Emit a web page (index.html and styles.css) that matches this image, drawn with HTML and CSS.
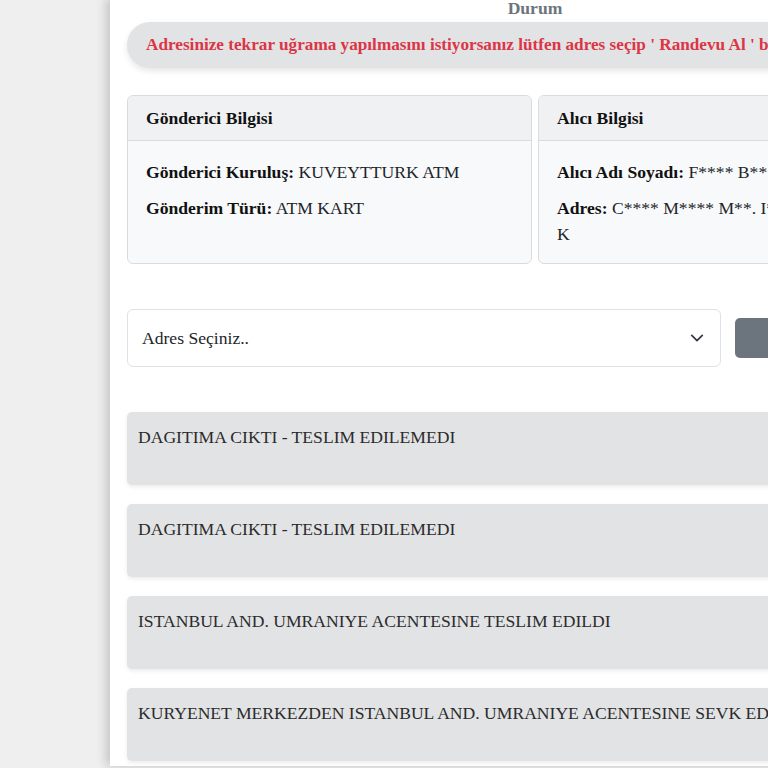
FILE: index.html
```html
<!DOCTYPE html>
<html lang="tr">
<head>
    <meta charset="UTF-8">
    <meta name="viewport" content="width=device-width, initial-scale=1.0">
    <title>Gönderi Takip</title>
    <link rel="stylesheet" href="styles.css">
</head>
<body>

    <div class="page">
        <div class="panel">
            <h3 class="status-title">Durum</h3>

            <div class="alert-pill">
                Adresinize tekrar uğrama yapılmasını istiyorsanız lütfen adres seçip ' Randevu Al ' butonuna tıklayınız.
            </div>

            <!-- Gönderici / Alıcı -->
            <div class="info-grid">
                <div class="info-card">
                    <div class="info-head">Gönderici Bilgisi</div>
                    <div class="info-body">
                        <p><b>Gönderici Kuruluş:</b> KUVEYTTURK ATM</p>
                        <p><b>Gönderim Türü:</b> ATM KART</p>
                    </div>
                </div>
                <div class="info-card">
                    <div class="info-head">Alıcı Bilgisi</div>
                    <div class="info-body">
                        <p><b>Alıcı Adı Soyadı:</b> F**** B****</p>
                        <p><b>Adres:</b> C**** M**** M**. I**** S**. N**:**<br>K</p>
                    </div>
                </div>
            </div>

            <!-- Randevu -->
            <div class="address-row">
                <div class="select-box">
                    <span>Adres Seçiniz..</span>
                    <svg width="14" height="14" viewBox="0 0 16 16">
                        <path d="M2 5l6 6 6-6" fill="none" stroke="#343a40" stroke-width="2" stroke-linecap="round" stroke-linejoin="round"/>
                    </svg>
                </div>
                <button class="btn-appointment">Randevu Al</button>
            </div>

            <!-- Hareketler -->
            <div class="timeline">
                <div class="timeline-item">DAGITIMA CIKTI - TESLIM EDILEMEDI</div>
                <div class="timeline-item">DAGITIMA CIKTI - TESLIM EDILEMEDI</div>
                <div class="timeline-item">ISTANBUL AND. UMRANIYE ACENTESINE TESLIM EDILDI</div>
                <div class="timeline-item">KURYENET MERKEZDEN ISTANBUL AND. UMRANIYE ACENTESINE SEVK EDILDI</div>
            </div>
        </div>
    </div>

</body>
</html>
```

FILE: styles.css
```css
* {
    margin: 0;
    padding: 0;
    box-sizing: border-box;
    font-family: "Liberation Serif", "Times New Roman", serif;
}

html,
body {
    height: 100%;
    overflow: hidden;
}

body {
    background: #efefef;
    color: #212529;
}

.page {
    padding-left: 110px;
}

.panel {
    width: 850px;
    min-height: 100vh;
    background: #fff;
    padding: 0 17px;
    box-shadow: -4px 0 10px rgba(0, 0, 0, 0.18);
}

.status-title {
    text-align: center;
    color: #6c757d;
    font-size: 17.6px;
    font-weight: 700;
    line-height: 20px;
    margin-top: -2px;
}

.alert-pill {
    margin-top: 4px;
    height: 46px;
    display: flex;
    align-items: center;
    padding: 0 19px;
    background: #e2e3e5;
    border-radius: 23px;
    color: #dc3545;
    font-size: 17.2px;
    font-weight: 700;
    white-space: nowrap;
    overflow: hidden;
    box-shadow: 0 3px 6px rgba(0, 0, 0, 0.1);
}

.info-grid {
    display: grid;
    grid-template-columns: 1fr 1fr;
    gap: 6px;
    margin-top: 27px;
}

.info-card {
    border: 1px solid #d9dcdf;
    border-radius: 6px;
    background: #f8f9fa;
    height: 169px;
    overflow: hidden;
}

.info-head {
    height: 45px;
    display: flex;
    align-items: center;
    padding: 0 18px;
    background: #f0f1f3;
    border-bottom: 1px solid #d9dcdf;
    font-size: 17.6px;
    font-weight: 700;
    color: #111;
}

.info-body {
    padding: 18px 18px;
    font-size: 17.6px;
    line-height: 26px;
    color: #212529;
}

.info-body p {
    margin-bottom: 10px;
}

.info-body b {
    color: #111;
}

.address-row {
    display: flex;
    align-items: center;
    gap: 14px;
    margin-top: 45px;
}

.select-box {
    width: 594px;
    height: 58px;
    display: flex;
    align-items: center;
    justify-content: space-between;
    padding: 0 16px 0 14px;
    background: #fff;
    border: 1px solid #dee2e6;
    border-radius: 6px;
    font-size: 17.6px;
    color: #212529;
}

.btn-appointment {
    flex: 1;
    height: 40px;
    border: none;
    border-radius: 5px;
    background: #6c757d;
    color: #fff;
    font-size: 17.6px;
}

.timeline {
    display: flex;
    flex-direction: column;
    gap: 19px;
    margin-top: 45px;
}

.timeline-item {
    height: 73px;
    padding: 13px 11px;
    background: #e2e3e5;
    border-radius: 5px;
    font-size: 17.6px;
    line-height: 24px;
    color: #2b2b2b;
    white-space: nowrap;
    box-shadow: 0 2px 4px rgba(0, 0, 0, 0.08);
}
```
